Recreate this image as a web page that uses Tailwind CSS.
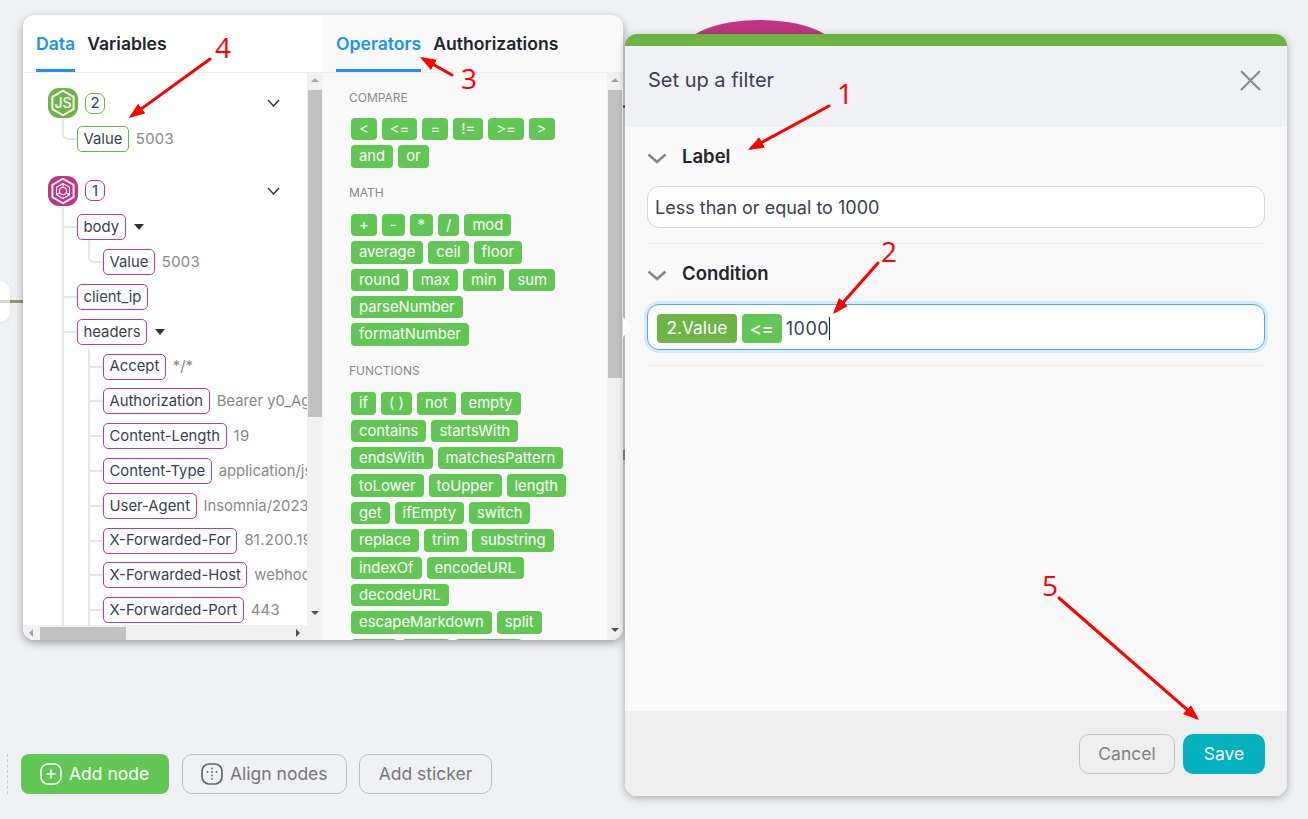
<!DOCTYPE html>
<html lang="en">
<head>
    <meta charset="UTF-8">
    <meta name="viewport" content="width=device-width, initial-scale=1.0">
    <title>Set up a filter</title>
    <script src="https://cdn.jsdelivr.net/npm/@tailwindcss/browser@4"></script>
</head>
<body class="bg-[#f0f1f5] font-['Inter',sans-serif]">
<div class="relative w-[1308px] h-[819px] overflow-hidden bg-[#f0f1f5]">

    <!-- Canvas behind the panels -->
    <div class="absolute left-0 top-[300px] w-[23px] h-[3px] bg-[#8f9a72]"></div>
    <div class="absolute left-[-30px] top-[281px] w-[40px] h-[41px] rounded-[10px] bg-white shadow-[0_1px_4px_rgba(0,0,0,0.08)]"></div>
    <div class="absolute left-0 top-[300px] w-[10px] h-[3px] bg-[#d8d8c8]"></div>
    <div class="absolute left-[684px] top-[20px] w-[152px] h-[60px] rounded-[50%] bg-[#c13584]"></div>
    <div class="absolute left-[623px] top-[105px] w-[2px] h-[3px] bg-[#c13584]"></div>
    <div class="absolute left-[623px] top-[450px] w-[2px] h-[10px] bg-[#999999]"></div>
    <div class="absolute left-[7px] top-[754px] h-[40px] border-l border-dashed border-[#c8c8c8]"></div>

    <!-- Data / operators panel -->
    <div class="absolute left-[23px] top-[15px] w-[600px] h-[625px] flex rounded-[12px] overflow-hidden shadow-[0_3px_8px_rgba(0,0,0,0.35)]">
        <!-- Data column -->
        <div class="w-[300px] h-full bg-white flex flex-col">
            <div class="h-[58px] shrink-0 flex gap-3 px-[13px] border-b border-[#eeeeee] text-[17.6px] font-semibold">
                <div class="h-[57px] pt-[16px] border-b-[3px] border-[#1e90ff] text-[#1e90ff]">Data</div>
                <div class="pt-[16px] text-[#1f2430]">Variables</div>
            </div>
            <div class="flex-1 flex min-h-0">
                <div class="w-[284px] overflow-hidden flex flex-col">
                    <div class="flex-1 min-h-0 overflow-hidden pt-[15px] text-[14.85px] text-[#374151] whitespace-nowrap">
                        <!-- Node 2 -->
                        <div class="flex items-center h-[30px] pl-[25px] relative">
                            <svg class="w-[30px] h-[30px]" viewBox="0 0 30 30">
                                <rect width="30" height="30" rx="11" fill="#6db446"/>
                                <path d="M15 2.8L25.6 8.9V21.1L15 27.2L4.4 21.1V8.9Z" fill="none" stroke="#fff" stroke-width="1.9"/>
                                <text x="15" y="20" text-anchor="middle" font-size="14" font-weight="500" fill="#fff" font-family="Inter">JS</text>
                            </svg>
                            <span class="ml-[7px] flex items-center justify-center w-[20px] h-[21px] rounded-[7px] border border-[#6db446] bg-white text-[15px]">2</span>
                            <svg class="absolute left-[244px] top-[11px] w-[13px] h-[8px]" viewBox="0 0 13 8"><path d="M1 1L6.5 7L12 1" fill="none" stroke="#333" stroke-width="1.4"/></svg>
                        </div>
                        <div class="ml-[39px] mt-[3.6px]">
                            <div class="relative flex items-center h-[34.8px] pl-[15px]">
                                <span class="absolute left-0 top-[-4px] w-[15px] h-[22px] border-l-2 border-b-2 border-[#e5e5e5] rounded-bl-[6px]"></span>
                                <span class="shrink-0 flex items-center h-[26px] px-[5.5px] rounded-[5px] border border-[#6db446] bg-white">Value</span>
                                <span class="shrink-0 ml-[7px] text-[#888888] tracking-[0.3px]">5003</span>
                            </div>
                        </div>
                        <!-- Node 1 -->
                        <div class="flex items-center h-[30px] pl-[25px] mt-[19.6px] relative">
                            <svg class="w-[30px] h-[30px]" viewBox="0 0 30 30">
                                <rect width="30" height="30" rx="11" fill="#c13584"/>
                                <path d="M15 2.8L25.6 8.9V21.1L15 27.2L4.4 21.1V8.9Z" fill="none" stroke="#fff" stroke-width="1.9"/>
                                <path d="M15 7.5L21.5 11.2V18.8L15 22.5L8.5 18.8V11.2Z" fill="none" stroke="#fff" stroke-width="1.1"/>
                                <circle cx="15" cy="15" r="3.6" fill="none" stroke="#fff" stroke-width="1.2"/>
                                <path d="M15 7.5V11.4M18.2 16.8L21.5 18.8M11.8 16.8L8.5 18.8" stroke="#fff" stroke-width="1.1"/>
                            </svg>
                            <span class="ml-[7px] flex items-center justify-center w-[20px] h-[21px] rounded-[7px] border border-[#c13584] bg-white text-[15px]">1</span>
                            <svg class="absolute left-[244px] top-[11px] w-[13px] h-[8px]" viewBox="0 0 13 8"><path d="M1 1L6.5 7L12 1" fill="none" stroke="#333" stroke-width="1.4"/></svg>
                        </div>
                        <div class="ml-[39px] pt-[4px] border-l-2 border-[#e5e5e5]">
                            <div class="flex items-center h-[34.8px]">
                                <span class="shrink-0 w-[13px] h-[2px] bg-[#e5e5e5]"></span>
                                <span class="shrink-0 flex items-center h-[26px] px-[5.5px] rounded-[5px] border border-[#c8388a] bg-white">body</span>
                                <span class="shrink-0 ml-[8px] w-0 h-0 border-x-[5.5px] border-t-[6px] border-x-transparent border-t-[#333]"></span>
                            </div>
                            <div class="relative ml-[24px] flex items-center h-[34.8px] pl-[15px]">
                                <span class="absolute left-0 top-[-5px] w-[15px] h-[23px] border-l-2 border-b-2 border-[#e5e5e5] rounded-bl-[6px]"></span>
                                <span class="shrink-0 flex items-center h-[26px] px-[5.5px] rounded-[5px] border border-[#c8388a] bg-white">Value</span>
                                <span class="shrink-0 ml-[7px] text-[#888888] tracking-[0.3px]">5003</span>
                            </div>
                            <div class="flex items-center h-[34.8px]">
                                <span class="shrink-0 w-[13px] h-[2px] bg-[#e5e5e5]"></span>
                                <span class="shrink-0 flex items-center h-[26px] px-[5.5px] rounded-[5px] border border-[#c8388a] bg-white">client_ip</span>
                            </div>
                            <div class="flex items-center h-[34.8px]">
                                <span class="shrink-0 w-[13px] h-[2px] bg-[#e5e5e5]"></span>
                                <span class="shrink-0 flex items-center h-[26px] px-[5.5px] rounded-[5px] border border-[#c8388a] bg-white">headers</span>
                                <span class="shrink-0 ml-[8px] w-0 h-0 border-x-[5.5px] border-t-[6px] border-x-transparent border-t-[#333]"></span>
                            </div>
                            <div class="ml-[24px] border-l-2 border-[#e5e5e5]">
                                <div class="flex items-center h-[34.8px]">
                                    <span class="shrink-0 w-[13px] h-[2px] bg-[#e5e5e5]"></span>
                                    <span class="shrink-0 flex items-center h-[26px] px-[5.5px] rounded-[5px] border border-[#c8388a] bg-white">Accept</span>
                                    <span class="shrink-0 ml-[7px] text-[#888888]">*/*</span>
                                </div>
                                <div class="flex items-center h-[34.8px]">
                                    <span class="shrink-0 w-[13px] h-[2px] bg-[#e5e5e5]"></span>
                                    <span class="shrink-0 flex items-center h-[26px] px-[5.5px] rounded-[5px] border border-[#c8388a] bg-white">Authorization</span>
                                    <span class="shrink-0 ml-[7px] text-[#888888]">Bearer y0_AgAAAA</span>
                                </div>
                                <div class="flex items-center h-[34.8px]">
                                    <span class="shrink-0 w-[13px] h-[2px] bg-[#e5e5e5]"></span>
                                    <span class="shrink-0 flex items-center h-[26px] px-[5.5px] rounded-[5px] border border-[#c8388a] bg-white">Content-Length</span>
                                    <span class="shrink-0 ml-[7px] text-[#888888] tracking-[0.3px]">19</span>
                                </div>
                                <div class="flex items-center h-[34.8px]">
                                    <span class="shrink-0 w-[13px] h-[2px] bg-[#e5e5e5]"></span>
                                    <span class="shrink-0 flex items-center h-[26px] px-[5.5px] rounded-[5px] border border-[#c8388a] bg-white">Content-Type</span>
                                    <span class="shrink-0 ml-[7px] text-[#888888]">application/json</span>
                                </div>
                                <div class="flex items-center h-[34.8px]">
                                    <span class="shrink-0 w-[13px] h-[2px] bg-[#e5e5e5]"></span>
                                    <span class="shrink-0 flex items-center h-[26px] px-[5.5px] rounded-[5px] border border-[#c8388a] bg-white">User-Agent</span>
                                    <span class="shrink-0 ml-[7px] text-[#888888]">Insomnia/2023.5.8</span>
                                </div>
                                <div class="flex items-center h-[34.8px]">
                                    <span class="shrink-0 w-[13px] h-[2px] bg-[#e5e5e5]"></span>
                                    <span class="shrink-0 flex items-center h-[26px] px-[5.5px] rounded-[5px] border border-[#c8388a] bg-white">X-Forwarded-For</span>
                                    <span class="shrink-0 ml-[7px] text-[#888888] tracking-[0.3px]">81.200.19.24</span>
                                </div>
                                <div class="flex items-center h-[34.8px]">
                                    <span class="shrink-0 w-[13px] h-[2px] bg-[#e5e5e5]"></span>
                                    <span class="shrink-0 flex items-center h-[26px] px-[5.5px] rounded-[5px] border border-[#c8388a] bg-white">X-Forwarded-Host</span>
                                    <span class="shrink-0 ml-[7px] text-[#888888]">webhook.site</span>
                                </div>
                                <div class="flex items-center h-[34.8px]">
                                    <span class="shrink-0 w-[13px] h-[2px] bg-[#e5e5e5]"></span>
                                    <span class="shrink-0 flex items-center h-[26px] px-[5.5px] rounded-[5px] border border-[#c8388a] bg-white">X-Forwarded-Port</span>
                                    <span class="shrink-0 ml-[7px] text-[#888888] tracking-[0.3px]">443</span>
                                </div>
                            </div>
                        </div>
                    </div>
                    <!-- Horizontal scrollbar -->
                    <div class="relative h-[15px] shrink-0 bg-[#f1f1f1]">
                        <span class="absolute left-[6px] top-[4px] w-0 h-0 border-y-[4px] border-r-[4px] border-y-transparent border-r-[#a3a3a3]"></span>
                        <span class="absolute left-[17px] top-[2px] w-[86px] h-[13px] bg-[#c1c1c1]"></span>
                        <span class="absolute left-[273px] top-[4px] w-0 h-0 border-y-[4px] border-l-[4px] border-y-transparent border-l-[#505050]"></span>
                    </div>
                </div>
                <!-- Vertical scrollbar -->
                <div class="relative w-[16px] bg-[#f1f1f1]">
                    <span class="absolute left-[4px] top-[5px] w-0 h-0 border-x-[4px] border-b-[4px] border-x-transparent border-b-[#a3a3a3]"></span>
                    <span class="absolute left-[1px] top-[17px] w-[14px] h-[327px] bg-[#c1c1c1]"></span>
                    <span class="absolute left-[4px] top-[538px] w-0 h-0 border-x-[4px] border-t-[4px] border-x-transparent border-t-[#505050]"></span>
                </div>
            </div>
        </div>
        <!-- Operators column -->
        <div class="w-[300px] h-full bg-[#f9f9f9] flex flex-col">
            <div class="h-[58px] shrink-0 flex gap-3 px-[13px] border-b border-[#eeeeee] text-[17.6px] font-semibold">
                <div class="h-[57px] pt-[16px] border-b-[3px] border-[#1e90ff] text-[#1e90ff]">Operators</div>
                <div class="pt-[16px] text-[#1f2430]">Authorizations</div>
            </div>
            <div class="flex-1 flex min-h-0">
                <div class="w-[284px] overflow-hidden pl-[26px] pt-[17px] text-[14.8px] text-white">
                    <div class="h-[16px] leading-[16px] text-[12px] text-[#888888] mb-[12px]">COMPARE</div>
                    <div class="ml-[2px] w-[225px] flex flex-wrap gap-[5px]">
                        <span class="flex items-center h-[22.4px] px-2 rounded-[4px] bg-[#62c655]">&lt;</span>
                        <span class="flex items-center h-[22.4px] px-2 rounded-[4px] bg-[#62c655]">&lt;=</span>
                        <span class="flex items-center h-[22.4px] px-2 rounded-[4px] bg-[#62c655]">=</span>
                        <span class="flex items-center h-[22.4px] px-2 rounded-[4px] bg-[#62c655]">!=</span>
                        <span class="flex items-center h-[22.4px] px-2 rounded-[4px] bg-[#62c655]">&gt;=</span>
                        <span class="flex items-center h-[22.4px] px-2 rounded-[4px] bg-[#62c655]">&gt;</span>
                        <span class="flex items-center h-[22.4px] px-2 rounded-[4px] bg-[#62c655]">and</span>
                        <span class="flex items-center h-[22.4px] px-2 rounded-[4px] bg-[#62c655]">or</span>
                    </div>
                    <div class="mt-[17px] h-[16px] leading-[16px] text-[12px] text-[#888888] mb-[13px]">MATH</div>
                    <div class="ml-[2px] w-[225px] flex flex-wrap gap-[5px]">
                        <span class="flex items-center h-[22.4px] px-2 rounded-[4px] bg-[#62c655]">+</span>
                        <span class="flex items-center h-[22.4px] px-2 rounded-[4px] bg-[#62c655]">-</span>
                        <span class="flex items-center h-[22.4px] px-2 rounded-[4px] bg-[#62c655]">*</span>
                        <span class="flex items-center h-[22.4px] px-2 rounded-[4px] bg-[#62c655]">/</span>
                        <span class="flex items-center h-[22.4px] px-2 rounded-[4px] bg-[#62c655]">mod</span>
                        <span class="flex items-center h-[22.4px] px-2 rounded-[4px] bg-[#62c655]">average</span>
                        <span class="flex items-center h-[22.4px] px-2 rounded-[4px] bg-[#62c655]">ceil</span>
                        <span class="flex items-center h-[22.4px] px-2 rounded-[4px] bg-[#62c655]">floor</span>
                        <span class="flex items-center h-[22.4px] px-2 rounded-[4px] bg-[#62c655]">round</span>
                        <span class="flex items-center h-[22.4px] px-2 rounded-[4px] bg-[#62c655]">max</span>
                        <span class="flex items-center h-[22.4px] px-2 rounded-[4px] bg-[#62c655]">min</span>
                        <span class="flex items-center h-[22.4px] px-2 rounded-[4px] bg-[#62c655]">sum</span>
                        <span class="flex items-center h-[22.4px] px-2 rounded-[4px] bg-[#62c655]">parseNumber</span>
                        <span class="flex items-center h-[22.4px] px-2 rounded-[4px] bg-[#62c655]">formatNumber</span>
                    </div>
                    <div class="mt-[17.5px] h-[16px] leading-[16px] text-[12px] text-[#888888] mb-[13px]">FUNCTIONS</div>
                    <div class="ml-[2px] w-[225px] flex flex-wrap gap-[5px]">
                        <span class="flex items-center h-[22.4px] px-2 rounded-[4px] bg-[#62c655]">if</span>
                        <span class="flex items-center h-[22.4px] px-2 rounded-[4px] bg-[#62c655]">( )</span>
                        <span class="flex items-center h-[22.4px] px-2 rounded-[4px] bg-[#62c655]">not</span>
                        <span class="flex items-center h-[22.4px] px-2 rounded-[4px] bg-[#62c655]">empty</span>
                        <span class="flex items-center h-[22.4px] px-2 rounded-[4px] bg-[#62c655]">contains</span>
                        <span class="flex items-center h-[22.4px] px-2 rounded-[4px] bg-[#62c655]">startsWith</span>
                        <span class="flex items-center h-[22.4px] px-2 rounded-[4px] bg-[#62c655]">endsWith</span>
                        <span class="flex items-center h-[22.4px] px-2 rounded-[4px] bg-[#62c655]">matchesPattern</span>
                        <span class="flex items-center h-[22.4px] px-2 rounded-[4px] bg-[#62c655]">toLower</span>
                        <span class="flex items-center h-[22.4px] px-2 rounded-[4px] bg-[#62c655]">toUpper</span>
                        <span class="flex items-center h-[22.4px] px-2 rounded-[4px] bg-[#62c655]">length</span>
                        <span class="flex items-center h-[22.4px] px-2 rounded-[4px] bg-[#62c655]">get</span>
                        <span class="flex items-center h-[22.4px] px-2 rounded-[4px] bg-[#62c655]">ifEmpty</span>
                        <span class="flex items-center h-[22.4px] px-2 rounded-[4px] bg-[#62c655]">switch</span>
                        <span class="flex items-center h-[22.4px] px-2 rounded-[4px] bg-[#62c655]">replace</span>
                        <span class="flex items-center h-[22.4px] px-2 rounded-[4px] bg-[#62c655]">trim</span>
                        <span class="flex items-center h-[22.4px] px-2 rounded-[4px] bg-[#62c655]">substring</span>
                        <span class="flex items-center h-[22.4px] px-2 rounded-[4px] bg-[#62c655]">indexOf</span>
                        <span class="flex items-center h-[22.4px] px-2 rounded-[4px] bg-[#62c655]">encodeURL</span>
                        <span class="flex items-center h-[22.4px] px-2 rounded-[4px] bg-[#62c655]">decodeURL</span>
                        <span class="flex items-center h-[22.4px] px-2 rounded-[4px] bg-[#62c655]">escapeMarkdown</span>
                        <span class="flex items-center h-[22.4px] px-2 rounded-[4px] bg-[#62c655]">split</span>
                        <span class="flex items-center w-[46px] h-[22.4px] rounded-[4px] bg-[#62c655]"></span>
                        <span class="flex items-center w-[48px] h-[22.4px] rounded-[4px] bg-[#62c655]"></span>
                        <span class="flex items-center w-[67px] h-[22.4px] rounded-[4px] bg-[#62c655]"></span>
                    </div>
                </div>
                <!-- Vertical scrollbar -->
                <div class="relative w-[16px] bg-[#f1f1f1]">
                    <span class="absolute left-[4px] top-[5px] w-0 h-0 border-x-[4px] border-b-[4px] border-x-transparent border-b-[#a3a3a3]"></span>
                    <span class="absolute left-[1px] top-[17px] w-[14px] h-[288px] bg-[#c1c1c1]"></span>
                    <span class="absolute left-[4px] top-[555px] w-0 h-0 border-x-[4px] border-t-[4px] border-x-transparent border-t-[#505050]"></span>
                </div>
            </div>
        </div>
    </div>

    <!-- Filter dialog -->
    <div class="absolute left-[625px] top-[34px] w-[662px] h-[762px] flex flex-col rounded-[12px] border-t-[12px] border-[#6db446] bg-[#f9f9f9] shadow-[0_2px_8px_rgba(0,0,0,0.3)]">
        <div class="h-[81px] shrink-0 flex items-center justify-between pb-[13px] pl-[23px] pr-[26px] bg-[#f0f1f5]">
            <span class="text-[20px] text-[#374151]">Set up a filter</span>
            <svg class="w-[21px] h-[21px]" viewBox="0 0 21 21"><path d="M1 1L20 20M20 1L1 20" stroke="#888888" stroke-width="2" fill="none"/></svg>
        </div>
        <div class="flex-1 px-[22px] pt-[17px]">
            <div class="flex items-center gap-[15px] h-[26px]">
                <svg class="w-[20px] h-[11px] mt-[3px]" viewBox="0 0 20 11"><path d="M1.5 1.5L10 9L18.5 1.5" fill="none" stroke="#888888" stroke-width="2.6"/></svg>
                <span class="text-[18.5px] font-semibold text-[#1f2430]">Label</span>
            </div>
            <div class="mt-[16px] h-[42px] flex items-center px-[7px] rounded-[12px] border border-[#d6d6d6] bg-white text-[18px] text-[#374151]">Less than or equal to 1000</div>
            <div class="mt-[15px] h-px bg-[#eeeeee]"></div>
            <div class="mt-[17px] flex items-center gap-[15px] h-[26px]">
                <svg class="w-[20px] h-[11px] mt-[3px]" viewBox="0 0 20 11"><path d="M1.5 1.5L10 9L18.5 1.5" fill="none" stroke="#888888" stroke-width="2.6"/></svg>
                <span class="text-[18.5px] font-semibold text-[#1f2430]">Condition</span>
            </div>
            <div class="mt-[17px] h-[46px] flex items-center pl-[9px] pt-[2px] rounded-[12px] border border-[#4aa8ff] ring-[3px] ring-[#d6eaff] bg-white text-[18px] text-[#374151]">
                <span class="flex items-center h-[29px] px-[9.5px] rounded-[4px] bg-[#6db446] text-white text-[17.3px]">2.Value</span>
                <span class="ml-[5px] flex items-center h-[29px] px-[8px] rounded-[4px] bg-[#62c655] text-white font-medium">&lt;=</span>
                <span class="ml-[4px] tracking-[0.5px]">1000</span>
                <span class="w-px h-[23px] bg-[#222]"></span>
            </div>
            <div class="mt-[15px] h-px bg-[#eeeeee]"></div>
        </div>
        <div class="h-[85px] shrink-0 flex justify-end gap-2 pt-[23px] pr-[22px] rounded-b-[12px] bg-[#efefef] text-[17.5px]">
            <span class="flex items-center justify-center w-[96px] h-[40px] rounded-[10px] border border-[#c4c4c4] text-[#808080]">Cancel</span>
            <span class="flex items-center justify-center w-[82px] h-[40px] rounded-[10px] bg-[#04b1be] text-white">Save</span>
        </div>
    </div>

    <!-- Canvas toolbar -->
    <div class="absolute left-[21px] top-[754px] flex text-[17.5px]">
        <div class="flex items-center w-[148px] h-[40px] pl-[19px] gap-[7px] rounded-[8px] bg-[#62c655] text-white">
            <svg class="w-[22px] h-[22px]" viewBox="0 0 22 22" fill="none" stroke="#fff"><rect x="1" y="1" width="20" height="20" rx="7" stroke-width="1.6"/><path d="M11 6.5V15.5M6.5 11H15.5" stroke-width="1.6"/></svg>
            <span>Add node</span>
        </div>
        <div class="ml-[13px] flex items-center w-[165px] h-[40px] pl-[18px] gap-[7px] rounded-[10px] border border-[#bdbdbd] text-[#777777]">
            <svg class="w-[22px] h-[22px]" viewBox="0 0 22 22" fill="#666"><rect x="1" y="1" width="20" height="20" rx="7" fill="none" stroke="#666" stroke-width="1.7"/><circle cx="11" cy="5.5" r="0.9"/><circle cx="11" cy="9" r="0.9"/><circle cx="11" cy="12.5" r="0.9"/><circle cx="11" cy="16" r="0.9"/><circle cx="6.5" cy="9" r="0.9"/><circle cx="15.5" cy="9" r="0.9"/></svg>
            <span>Align nodes</span>
        </div>
        <div class="ml-[12px] flex items-center justify-center w-[133px] h-[40px] rounded-[10px] border border-[#bdbdbd] text-[#777777]">Add sticker</div>
    </div>

    <!-- Dialog pointer and annotations -->
    <svg class="absolute left-0 top-0 w-[1308px] h-[819px] pointer-events-none" viewBox="0 0 1308 819">
        <defs>
            <marker id="head" viewBox="0 0 16 12" refX="12" refY="6" markerWidth="16" markerHeight="12" orient="auto" markerUnits="userSpaceOnUse"><path d="M0 0L16 6L0 12z" fill="#ff0000"/></marker>
        </defs>
        <path d="M623 317L632 327L623 337Z" fill="#ffffff"/>
        <g stroke="#ff0000" stroke-width="3" stroke-linecap="round" fill="none">
            <line x1="210" y1="59" x2="132" y2="115.6" marker-end="url(#head)"/>
            <line x1="452" y1="75" x2="423.5" y2="59" marker-end="url(#head)"/>
            <line x1="829" y1="106" x2="751.5" y2="148" marker-end="url(#head)"/>
            <line x1="878" y1="263" x2="835.6" y2="311" marker-end="url(#head)"/>
            <line x1="1059" y1="598" x2="1196" y2="717.4" marker-end="url(#head)"/>
        </g>
        <g fill="#ff0000" font-family="'Open Sans'" font-size="28">
            <text x="215" y="58">4</text>
            <text x="461" y="89">3</text>
            <text x="837" y="104">1</text>
            <text x="881" y="262">2</text>
            <text x="1042" y="596">5</text>
        </g>
    </svg>
</div>
</body>
</html>
